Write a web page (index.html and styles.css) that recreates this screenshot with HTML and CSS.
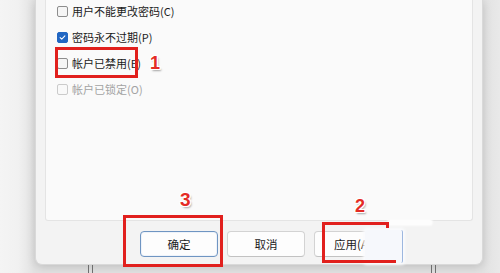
FILE: index.html
```html
<!DOCTYPE html>
<html lang="zh-CN">
<head>
<meta charset="utf-8">
<title>帐户属性</title>
<link rel="stylesheet" href="styles.css">
</head>
<body>
<div class="scene">
  <div class="dialog">
    <div class="panel">
      <ul class="options">
        <li class="opt"><span class="cb"></span><span class="lbl">用户不能更改密码(C)</span></li>
        <li class="opt"><span class="cb checked"><svg viewBox="0 0 11 11" width="11" height="11"><path d="M2.6 5.6 L4.6 7.5 L8.4 3.5" fill="none" stroke="#fff" stroke-width="1.3" stroke-linecap="round" stroke-linejoin="round"/></svg></span><span class="lbl">密码永不过期(P)</span></li>
        <li class="opt"><span class="cb"></span><span class="lbl">帐户已禁用(E)</span></li>
        <li class="opt disabled"><span class="cb"></span><span class="lbl">帐户已锁定(O)</span></li>
      </ul>
    </div>
    <div class="footer">
      <button class="btn default">确定</button>
      <button class="btn">取消</button>
      <button class="btn">应用(A)</button>
    </div>
  </div>
  <div class="under">
    <span class="vline"></span><span class="vline"></span>
    <span class="spacer"></span>
    <span class="vline"></span><span class="vline"></span>
  </div>

  <div class="smudge"></div>
  <div class="smudge-top"></div>
  <div class="mark mark1"></div>
  <div class="mark mark3"></div>
  <svg class="mark2" width="80" height="46" viewBox="0 0 80 46"><path d="M65.5 6 V1.5 H1.5 V39.5 H74" fill="none" stroke="#e1201d" stroke-width="3"/></svg>
  <span class="num num1">1</span>
  <span class="num num2">2</span>
  <span class="num num3">3</span>
</div>
</body>
</html>
```

FILE: styles.css
```css
* { box-sizing: border-box; }
html, body {
  margin: 0;
  padding: 0;
}
body {
  width: 500px;
  height: 273px;
  overflow: hidden;
  background: #ececec;
  font-family: "Noto Sans CJK SC", "Noto Sans", sans-serif;
  font-size: 11px;
  color: #1b1b1b;
}
.scene {
  position: relative;
  width: 500px;
  height: 273px;
  background: linear-gradient(to right, #f4f4f4 0, #f1f1f1 18px, #e2e2e2 34px, #e2e2e2 484px, #e9e9e9 500px);
}
.dialog {
  margin-left: 35px;
  width: 448px;
  height: 265px;
  background: #f3f3f3;
  border: 1px solid #d9d9d9;
  border-top: none;
  border-radius: 0 0 7px 7px;
  box-shadow: 0 2px 10px rgba(0,0,0,0.16);
  display: flex;
  flex-direction: column;
}
.panel {
  margin: 0 9px;
  height: 221px;
  background: #fafafa;
  border: 1px solid #e4e4e4;
  border-top: none;
  border-radius: 0 0 3px 3px;
  padding-left: 11px;
}
.options {
  list-style: none;
  margin: -2px 0 0;
  padding: 0;
}
.opt {
  height: 26px;
  display: flex;
  align-items: center;
  gap: 4px;
}
.cb {
  width: 11px;
  height: 11px;
  border: 1px solid #8d8d8d;
  border-radius: 2px;
  background: #f5f5f5;
  display: flex;
  align-items: center;
  justify-content: center;
  flex: none;
}
.cb svg { display: block; }
.cb.checked {
  background: #2166c2;
  border-color: #2166c2;
}
.lbl {
  line-height: 1;
  white-space: nowrap;
}
.opt.disabled .cb {
  border-color: #cbcbcb;
  background: #f9f9f9;
}
.opt.disabled .lbl { color: #a3a3a3; }

.footer {
  flex: 1;
  display: flex;
  align-items: flex-start;
  gap: 9px;
  padding: 10px 0 0 104px;
}
.btn {
  width: 78px;
  height: 26px;
  border: 1px solid #d3d3d3;
  border-bottom-color: #c2c2c2;
  border-radius: 4px;
  background: #fdfdfd;
  font-family: "Noto Sans CJK SC", "Noto Sans", sans-serif;
  font-size: 11.5px;
  color: #1b1b1b;
  padding: 0;
  display: flex;
  align-items: center;
  justify-content: center;
}
.btn.default {
  border-color: #6f95c2;
  box-shadow: inset 0 0 0 1px #eef3fa;
}
.under {
  height: 8px;
  display: flex;
  padding-left: 88px;
  gap: 3px;
}
.vline {
  width: 1px;
  height: 8px;
  background: #6e6e6e;
}
.spacer { width: 332px; }

.smudge {
  position: absolute;
  left: 365px;
  top: 230px;
  width: 38px;
  height: 33px;
  background: #f6f8fc;
  border-right: 1px solid #9db7df;
  border-radius: 2px;
  box-shadow: 0 0 3px 2px #fafbfd;
}
.smudge-top {
  position: absolute;
  left: 388px;
  top: 220px;
  width: 44px;
  height: 5px;
  background: #fdfdfd;
  border-radius: 3px;
  box-shadow: 0 0 2px 1px #fbfbfb;
}
.mark {
  position: absolute;
  border: 3px solid #e1201d;
}
.mark1 { left: 55px; top: 47px; width: 83px; height: 31px; }
.mark3 { left: 123px; top: 215px; width: 100px; height: 52px; }
.mark2 { position: absolute; left: 322px; top: 222px; }
.num {
  position: absolute;
  font-family: "Liberation Sans", Arial, sans-serif;
  font-weight: bold;
  color: #e42b25;
  line-height: 1;
  text-shadow: -1px 0 0 #fff, 1px 0 0 #fff, 0 -1px 0 #fff, 0 1px 0 #fff,
               -1px -1px 0 #fff, 1px 1px 0 #fff, -1px 1px 0 #fff, 1px -1px 0 #fff,
               1.5px 1.5px 2px rgba(0,0,0,0.35);
}
.num1 { left: 150px; top: 54px; font-size: 18px; }
.num2 { left: 355px; top: 197px; font-size: 18px; }
.num3 { left: 180px; top: 190px; font-size: 19px; }
```
